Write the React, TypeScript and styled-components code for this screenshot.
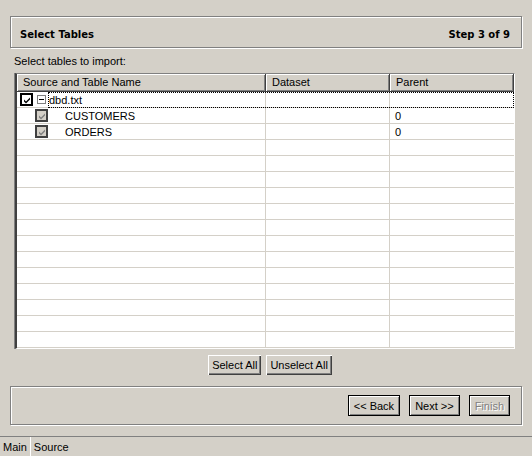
import styled, { createGlobalStyle } from 'styled-components'

const GlobalStyle = createGlobalStyle`
  html, body {
    margin: 0;
    padding: 0;
    background: #d4d0c8;
  }
  body {
    font-family: 'Liberation Sans', Arial, sans-serif;
    font-size: 11px;
    color: #000;
  }
`

type Row = { name: string; dataset: string; parent: string; level: number }

const rows: Row[] = [
  { name: 'dbd.txt', dataset: '', parent: '', level: 0 },
  { name: 'CUSTOMERS', dataset: '', parent: '0', level: 1 },
  { name: 'ORDERS', dataset: '', parent: '0', level: 1 },
]

const TOTAL_ROWS = 16

const CheckMark = ({ color }: { color: string }) => (
  <svg width="8" height="8" viewBox="0 0 8 8">
    <path d="M1 3.5 L3 5.5 L7 1.5 L7 3.5 L3 7.5 L1 5.5 Z" fill={color} />
  </svg>
)

const App = () => {
  const filler = Array.from({ length: TOTAL_ROWS - rows.length })
  return (
    <Page>
      <GlobalStyle />
      <Content>
        <TitlePanel>
          <Title>Select Tables</Title>
          <Title>Step 3 of 9</Title>
        </TitlePanel>
        <Prompt>Select tables to import:</Prompt>
        <Grid>
          <HeadCell>Source and Table Name</HeadCell>
          <HeadCell>Dataset</HeadCell>
          <HeadCell>Parent</HeadCell>
          {rows.map((r) => (
            <DataRow key={r.name} $focused={r.level === 0}>
              <Cell>
                {r.level === 0 ? (
                  <>
                    <Check $enabled>
                      <CheckMark color="#000" />
                    </Check>
                    <Expander />
                    <NameText>{r.name}</NameText>
                  </>
                ) : (
                  <>
                    <Check $enabled={false} $indent>
                      <CheckMark color="#808080" />
                    </Check>
                    <ChildName>{r.name}</ChildName>
                  </>
                )}
              </Cell>
              <Cell>{r.dataset}</Cell>
              <Cell $pad>{r.parent}</Cell>
            </DataRow>
          ))}
          {filler.map((_, i) => (
            <DataRow key={i}>
              <Cell />
              <Cell />
              <Cell />
            </DataRow>
          ))}
        </Grid>
        <ButtonRow>
          <Button>Select All</Button>
          <Button>Unselect All</Button>
        </ButtonRow>
        <NavPanel>
          <NavButton>&lt;&lt; Back</NavButton>
          <NavButton>Next &gt;&gt;</NavButton>
          <NavButton disabled>Finish</NavButton>
        </NavPanel>
      </Content>
      <TabBar>
        <Tab $active>Main</Tab>
        <Tab>Source</Tab>
      </TabBar>
    </Page>
  )
}

export default App

const Page = styled.div`
  width: 532px;
  height: 456px;
  display: flex;
  flex-direction: column;
  background: #d4d0c8;
  overflow: hidden;
`

const Content = styled.div`
  flex: 1;
  display: flex;
  flex-direction: column;
  padding: 16px 10px 0 10px;
`

const TitlePanel = styled.div`
  box-sizing: border-box;
  height: 32px;
  display: flex;
  align-items: center;
  justify-content: space-between;
  padding: 5px 11px 0 9px;
  border: 1px solid #808080;
  box-shadow: inset 1px 1px 0 #fff, 1px 1px 0 #fff;
`

const Title = styled.span`
  font-family: 'DejaVu Sans', Verdana, sans-serif;
  font-weight: bold;
  font-size: 10px;
`

const Prompt = styled.div`
  margin: 6px 0 0 4px;
  height: 19px;
  line-height: 15px;
`

const Grid = styled.div`
  margin-left: 5px;
  width: 497px;
  display: grid;
  grid-template-columns: 249px 124px 1fr;
  grid-auto-rows: 16px;
  grid-template-rows: 18px;
  background: #fff;
  border-top: 1px solid #808080;
  border-left: 2px solid #404040;
  border-right: 1px solid #fff;
  border-bottom: 1px solid #fff;
  box-shadow: -1px 0 0 #808080;
`

const HeadCell = styled.div`
  background: #d4d0c8;
  padding-left: 6px;
  line-height: 16px;
  white-space: nowrap;
  box-shadow: inset 1px 1px 0 #fff, inset -1px -1px 0 #808080;
  border-right: 1px solid #404040;
  border-bottom: 1px solid #404040;
  box-sizing: border-box;
`

const DataRow = styled.div<{ $focused?: boolean }>`
  grid-column: 1 / -1;
  display: grid;
  grid-template-columns: subgrid;
  position: relative;
  &::after {
    content: '';
    display: ${(p) => (p.$focused ? 'block' : 'none')};
    position: absolute;
    left: 31px;
    right: 0;
    top: 0;
    bottom: 0;
    outline: 1px dotted #000;
    outline-offset: -1px;
    pointer-events: none;
  }
`

const Cell = styled.div<{ $pad?: boolean }>`
  display: flex;
  align-items: center;
  box-sizing: border-box;
  border-right: 1px solid #d4d0c8;
  border-bottom: 1px solid #d4d0c8;
  padding-left: ${(p) => (p.$pad ? '5px' : '0')};
  white-space: nowrap;
  &:last-child {
    border-right: none;
  }
`

const Check = styled.span<{ $enabled: boolean; $indent?: boolean }>`
  width: 9px;
  height: 9px;
  margin-left: ${(p) => (p.$indent ? '18px' : '3px')};
  display: inline-flex;
  align-items: center;
  justify-content: center;
  border: 2px solid ${(p) => (p.$enabled ? '#000' : '#404040')};
  background: ${(p) => (p.$enabled ? '#fff' : '#d4d0c8')};
`

const Expander = styled.span`
  position: relative;
  width: 7px;
  height: 7px;
  margin-left: 4px;
  border: 1px solid #808080;
  background: #fff;
  &::after {
    content: '';
    position: absolute;
    left: 1px;
    top: 3px;
    width: 5px;
    height: 1px;
    background: #000;
  }
`

const NameText = styled.span`
  margin-left: 3px;
`

const ChildName = styled.span`
  margin-left: 17px;
`

const ButtonRow = styled.div`
  display: flex;
  justify-content: center;
  gap: 5px;
  margin-top: 6px;
  padding-left: 8px;
`

const Button = styled.button`
  font-family: 'Liberation Sans', Arial, sans-serif;
  font-size: 11px;
  height: 20px;
  padding: 0 4px;
  background: #d4d0c8;
  color: #000;
  border: none;
  box-shadow: inset 1px 1px 0 #fff, inset -1px -1px 0 #404040, inset -2px -2px 0 #808080;
`

const NavPanel = styled.div`
  margin-top: 11px;
  height: 37px;
  display: flex;
  align-items: center;
  justify-content: flex-end;
  gap: 9px;
  padding-right: 11px;
  border: 1px solid #808080;
  box-shadow: inset 1px 1px 0 #fff, 1px 1px 0 #fff;
`

const NavButton = styled.button`
  font-family: 'Liberation Sans', Arial, sans-serif;
  font-size: 11px;
  height: 21px;
  padding: 0 5px;
  background: #d4d0c8;
  color: #000;
  border: 1px solid #000;
  box-shadow: inset 1px 1px 0 #fff, inset -1px -1px 0 #808080;
  &:disabled {
    color: #808080;
    text-shadow: 1px 1px 0 #fff;
  }
`

const TabBar = styled.div`
  height: 19px;
  display: flex;
  border-top: 1px solid #808080;
`

const Tab = styled.div<{ $active?: boolean }>`
  display: flex;
  align-items: center;
  padding: 0 3px 0 3px;
  background: #d4d0c8;
  border-right: ${(p) => (p.$active ? '1px solid #fff' : 'none')};
`
